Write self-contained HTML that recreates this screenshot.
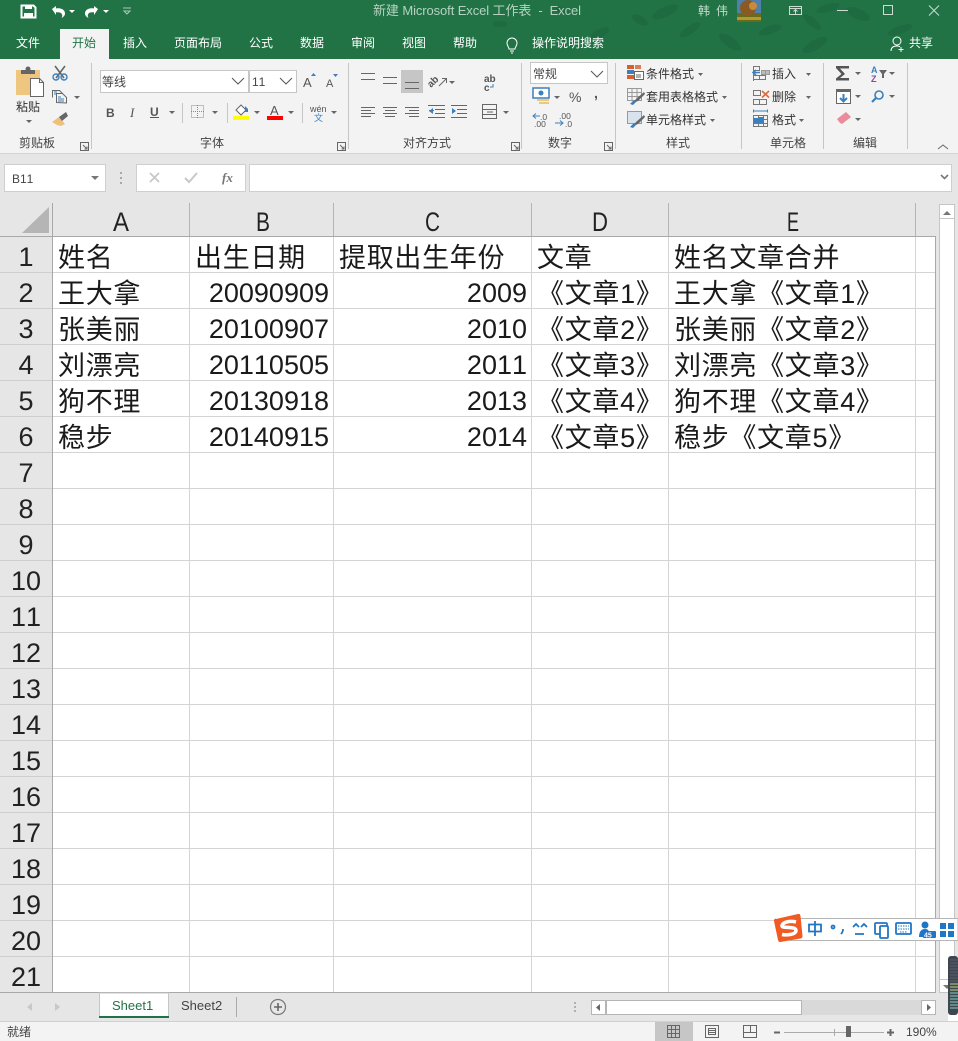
<!DOCTYPE html>
<html lang="zh"><head><meta charset="utf-8"><title>Excel</title>
<style>
html,body{margin:0;padding:0;width:958px;height:1041px;overflow:hidden;background:#fff}
svg{display:block}
text{font-family:"Liberation Sans","Noto Sans CJK SC",sans-serif;font-kerning:none}
.t{font-size:12px;fill:#fff}
.c{font-size:27px;letter-spacing:.7px;fill:#1a1a1a;transform:translateY(1px)}
.n{font-size:27px;fill:#1a1a1a;text-anchor:end}
.h{font-size:27px;fill:#222;text-anchor:middle}
.l{font-size:27px;fill:#222}
.sf{font-family:"Liberation Serif",serif}
.ln{stroke:#d4d4d4;stroke-width:1;fill:none}
.ic{stroke:#666;stroke-width:1;fill:none}
.ar{fill:#666}
</style></head><body>
<svg width="958" height="1041" viewBox="0 0 958 1041" xmlns="http://www.w3.org/2000/svg">
<!-- Title & tab background -->
<rect width="958" height="59" fill="#217346"/>
<g fill="#1e6a41">
<ellipse cx="665" cy="12" rx="14" ry="5" transform="rotate(-25 665 12)"/><ellipse cx="640" cy="20" rx="9" ry="4" transform="rotate(30 640 20)"/><ellipse cx="690" cy="30" rx="12" ry="4" transform="rotate(-35 690 30)"/><ellipse cx="730" cy="42" rx="13" ry="5" transform="rotate(35 730 42)"/><ellipse cx="770" cy="30" rx="12" ry="4" transform="rotate(-20 770 30)"/><ellipse cx="812" cy="22" rx="11" ry="4" transform="rotate(40 812 22)"/><ellipse cx="815" cy="45" rx="14" ry="5" transform="rotate(-30 815 45)"/><ellipse cx="858" cy="14" rx="13" ry="5" transform="rotate(25 858 14)"/><ellipse cx="828" cy="8" rx="12" ry="4" transform="rotate(-15 828 8)"/><ellipse cx="900" cy="30" rx="13" ry="4" transform="rotate(-20 900 30)"/><ellipse cx="560" cy="10" rx="7" ry="3" transform="rotate(25 560 10)"/><ellipse cx="600" cy="33" rx="10" ry="4" transform="rotate(-25 600 33)"/><ellipse cx="500" cy="24" rx="7" ry="3"/>
</g>
<!-- QAT -->
<path d="M21.500 5.500h12l2 2v10h-14z" fill="none" stroke="#fff" stroke-width="2"/><rect x="25" y="5" width="7" height="4" fill="#fff"/><rect x="24" y="13" width="9" height="5" fill="#fff"/>
<path d="M52 9l4-3v2.500c6-1 9 2 9 5 0 2-1.500 3.500-3.500 4.500 1-1.500 1-3 0-4.500-1-1.200-3-1.500-5.500-1.200V15z" fill="#fff"/><path d="M69 10h6l-3 3z" fill="#fff"/>
<path d="M98 9l-4-3v2.500c-6-1-9 2-9 5 0 2 1.500 3.500 3.500 4.500-1-1.500-1-3 0-4.500 1-1.200 3-1.500 5.500-1.200V15z" fill="#fff"/><path d="M103 10h6l-3 3z" fill="#fff"/>
<path d="M123 8h8M124 11h6l-3 3z" stroke="#a9c9b6" fill="none"/>
<text x="373" y="15" font-size="13" fill="#b6d2c1" textLength="208" lengthAdjust="spacing" style="white-space:pre">新建 Microsoft Excel 工作表  -  Excel</text>
<text x="698" y="15" font-size="12" fill="#c3dacb" textLength="30">韩 伟</text>
<!-- Avatar -->
<rect x="737" y="0" width="24" height="22" fill="#4f7fae"/><rect x="737" y="13" width="24" height="9" fill="#6a6a1c"/><circle cx="748" cy="8" r="8" fill="#8a5a25"/><circle cx="753" cy="6" r="4" fill="#c98a3a"/><rect x="737" y="17" width="24" height="3" fill="#b09a2a"/>
<!-- window controls -->
<rect x="789.500" y="6.500" width="12" height="8" fill="none" stroke="#c9ddd0"/><path d="M790 8.500h12M795.500 14v-4M793.500 11.500l2-2 2 2" stroke="#c9ddd0" fill="none"/>
<path d="M837 10.500h11" stroke="#c9ddd0"/><rect x="883.500" y="5.500" width="9" height="9" fill="none" stroke="#c9ddd0"/>
<path d="M929 5.500l10 10M939 5.500l-10 10" stroke="#c9ddd0"/>
<!-- Tabs -->
<rect x="60" y="29" width="49" height="30" fill="#f3f3f3"/>
<text x="16" y="47" class="t">文件</text><text x="123" y="47" class="t">插入</text><text x="174" y="47" class="t">页面布局</text><text x="249" y="47" class="t">公式</text><text x="300" y="47" class="t">数据</text><text x="351" y="47" class="t">审阅</text><text x="402" y="47" class="t">视图</text><text x="453" y="47" class="t">帮助</text><text x="532" y="47" class="t">操作说明搜索</text><text x="909" y="47" class="t">共享</text>
<text x="72" y="47" font-size="12" fill="#217346">开始</text>
<path d="M509 49c0-2-2-3-2-6a5 5 0 0 1 10 0c0 3-2 4-2 6zM510 51h4M511 53h2" fill="none" stroke="#fff"/>
<circle cx="897" cy="41" r="4" fill="none" stroke="#fff"/><path d="M891 51c0-4 3-5 6-5 1 0 2 .3 3 .7M901 47v5M898.500 49.500h5" fill="none" stroke="#fff"/>
<!-- Ribbon -->
<rect y="59" width="958" height="94" fill="#f3f3f3"/>
<rect y="153" width="958" height="1" fill="#d5d5d5"/>
<rect y="154" width="958" height="49" fill="#e6e6e6"/>
<g stroke="#c6c6c6"><path d="M91.500 63v86M348.500 63v86M521.500 63v86M615.500 63v86M741.500 63v86M823.500 63v86M907.500 63v86"/></g>
<!-- Clipboard -->
<path d="M16 70h24v25H16z" fill="#efc67f"/><rect x="21" y="70" width="14" height="4" fill="#666"/><circle cx="28" cy="69" r="2.500" fill="#666"/>
<path d="M30.500 78.500h9l4 4v14h-13z" fill="#fff" stroke="#666"/><path d="M39.500 78.500v4h4" fill="none" stroke="#666"/>
<text x="16" y="111" font-size="12" fill="#333">粘贴</text><path class="ar" d="M26 120h6l-3 3z"/>
<path d="M55 66l9 12M65 66l-9 12" stroke="#666" stroke-width="1.600" fill="none"/><circle cx="56" cy="77" r="3" fill="none" stroke="#3b7fbd" stroke-width="1.400"/><circle cx="64" cy="77" r="3" fill="none" stroke="#3b7fbd" stroke-width="1.400"/>
<path class="ic" d="M52.500 97.500v-7h7l3 3M56.500 102.500v-9h6l4 4v5.500z" fill="#fff"/><path d="M58 97h3M58 99h6M58 101h6M54 92h3M54 94h2" stroke="#3b7fbd" stroke-width="1"/><path class="ar" d="M74 96h6l-3 3z"/>
<path d="M52 122l7-5 6 7-4 2-4-1z" fill="#eec07c"/><path d="M59 117l3 4 6-5-2-4z" fill="#666"/>
<text x="19" y="147" font-size="12" fill="#444">剪贴板</text>
<path class="ic" d="M80.500 142.500h8v8h-8zM83 145l4 4M87 146.500v2.500h-2.500" stroke="#777"/>
<!-- Font -->
<rect x="100.500" y="70.500" width="148" height="22" fill="#fff" stroke="#c6c6c6"/><rect x="249.500" y="70.500" width="47" height="22" fill="#fff" stroke="#c6c6c6"/>
<text x="102" y="86" font-size="12" fill="#444">等线</text><text x="252" y="86" font-size="12" fill="#444">11</text>
<path d="M232 78l6 6 6-6M280 78l6 6 6-6" fill="none" stroke="#555"/>
<text x="303" y="87" font-size="13" fill="#555">A</text><path d="M311 76h5l-2.500-3z" fill="#3b7fbd"/>
<text x="326" y="87" font-size="11" fill="#555">A</text><path d="M333 74h5l-2.500 3z" fill="#3b7fbd"/>
<text x="106" y="117" font-size="12" font-weight="bold" fill="#555">B</text><text x="130" y="117" font-size="13" font-style="italic" fill="#555" class="sf" style="font-family:'Liberation Serif',serif">I</text><text x="150" y="116" font-size="12" font-weight="bold" fill="#555">U</text><rect x="150" y="117" width="9" height="1" fill="#555"/>
<path class="ar" d="M169 111h6l-3 3z"/><path d="M182.500 103v20M227.500 103v20M302.500 103v20" stroke="#c6c6c6"/>
<rect x="191.500" y="105.500" width="12" height="12" fill="none" stroke="#888" stroke-dasharray="1 1"/><path d="M197.500 105v13M191 111.500h13" stroke="#888" stroke-dasharray="1 1"/>
<path class="ar" d="M212 111h6l-3 3z"/>
<path d="M236 110l5-5 5 5-5 5z" fill="#fff" stroke="#666"/><path d="M245 106l3 3v3h-3z" fill="#3b7fbd"/><rect x="233" y="116" width="16" height="4" fill="#ff0"/><path class="ar" d="M254 111h6l-3 3z"/>
<text x="270" y="115" font-size="13" fill="#555">A</text><rect x="267" y="116" width="16" height="4" fill="#f00"/><path class="ar" d="M288 111h6l-3 3z"/>
<text x="310" y="112" font-size="9" fill="#555">wén</text><text x="314" y="121" font-size="9" fill="#3b7fbd">文</text><path class="ar" d="M331 111h6l-3 3z"/>
<text x="200" y="147" font-size="12" fill="#444">字体</text>
<path class="ic" d="M337.500 142.500h8v8h-8zM340 145l4 4M344 146.500v2.500h-2.500" stroke="#777"/>
<!-- Alignment -->
<rect x="401" y="70" width="22" height="23" fill="#c6c6c6"/>
<g stroke="#666"><path d="M361 73.500h14M361 79.500h14M383 77.500h14M383 83.500h14M405 82.500h14M405 88.500h14"/>
<path d="M361 107.500h14M361 110.500h10M361 113.500h14M361 116.500h10M383 107.500h14M385 110.500h10M383 113.500h14M385 116.500h10M405 107.500h14M409 110.500h10M405 113.500h14M409 116.500h10"/>
<path d="M435 109.500h10M435 113.500h10M428 117.500h17M428 105.500h17"/><path d="M457 109.500h10M457 113.500h10M451 117.500h16M451 105.500h16"/></g>
<path d="M429 111l4-3v6z" fill="#3b7fbd"/><path d="M429 110.500h5" stroke="#3b7fbd"/><path d="M456 111l-4-3v6z" fill="#3b7fbd"/>
<text x="431" y="88" font-size="10" fill="#555" font-weight="bold" transform="rotate(-45 431 88)">ab</text><path d="M439 86l7-7M442 78.500h4.500V83" fill="none" stroke="#666"/><path class="ar" d="M449 81h6l-3 3z"/>
<text x="403" y="147" font-size="12" fill="#444">对齐方式</text>
<text x="484" y="82" font-size="10" fill="#555" font-weight="bold">ab</text><text x="484" y="91" font-size="10" fill="#555" font-weight="bold">c</text><path d="M493 84v3h-3" stroke="#3b7fbd" fill="none"/>
<rect x="482.500" y="104.500" width="14" height="14" fill="none" stroke="#666"/><path d="M483 109.500h14M483 114.500h14M487 112h6" stroke="#666"/><path class="ar" d="M503 111h6l-3 3z"/>
<path class="ic" d="M511.500 142.500h8v8h-8zM514 145l4 4M518 146.500v2.500h-2.500" stroke="#777"/>
<!-- Number -->
<rect x="530.500" y="62.500" width="77" height="21" fill="#fff" stroke="#c6c6c6"/><text x="533" y="78" font-size="12" fill="#444">常规</text><path d="M591 71l6 6 6-6" fill="none" stroke="#555"/>
<rect x="533" y="88" width="16" height="10" fill="#fff" stroke="#3b7fbd" stroke-width="1.500"/><circle cx="541" cy="93" r="2.500" fill="#3b7fbd"/><rect x="537" y="99" width="12" height="2" fill="#efc67f"/><rect x="539" y="102" width="10" height="2" fill="#efc67f"/><path class="ar" d="M554 96h6l-3 3z"/>
<text x="569" y="102" font-size="14" fill="#555">%</text><text x="594" y="98" font-size="14" fill="#555" font-weight="bold">,</text>
<text x="540" y="120" font-size="8.500" fill="#555">.0</text><text x="534" y="127" font-size="8.500" fill="#555">.00</text><path d="M533 116h7M536 113.500l-3 2.500 3 2.500" stroke="#3b7fbd" fill="none"/>
<text x="559" y="119" font-size="8.500" fill="#555">.00</text><text x="565" y="127" font-size="8.500" fill="#555">.0</text><path d="M555 123h8M560 120.500l3 2.500-3 2.500" stroke="#3b7fbd" fill="none"/>
<text x="548" y="147" font-size="12" fill="#444">数字</text>
<path class="ic" d="M604.500 142.500h8v8h-8zM607 145l4 4M611 146.500v2.500h-2.500" stroke="#777"/>
<!-- Styles -->
<rect x="627" y="65" width="7" height="4" fill="#d9602c"/><rect x="635" y="65" width="6" height="4" fill="#d9602c" opacity=".8"/><rect x="627" y="70" width="7" height="4" fill="#3b7fbd"/><rect x="627" y="75" width="7" height="4" fill="#d9602c"/><rect x="634.500" y="71.500" width="9" height="8" fill="#fff" stroke="#666"/><path d="M636 75h5M636 77h5" stroke="#666"/>
<text x="646" y="78" font-size="12" fill="#333">条件格式</text><path class="ar" d="M698 73h5l-2.500 3z"/>
<g fill="none" stroke="#999"><rect x="627.500" y="88.500" width="14" height="12"/><path d="M627 92.500h15M627 96.500h15M632 88v13M637 88v13"/></g><path d="M633 103l3-4 8-7 1 2-7 7z" fill="#666"/><path d="M630 104l4-4 2 2-3 3z" fill="#3b7fbd"/>
<text x="646" y="101" font-size="12" fill="#333">套用表格格式</text><path class="ar" d="M722 96h5l-2.500 3z"/>
<rect x="627.500" y="111.500" width="14" height="12" fill="#d8e3ee" stroke="#999"/><path d="M633 126l3-4 8-7 1 2-7 7z" fill="#666"/><path d="M630 127l4-4 2 2-3 3z" fill="#3b7fbd"/>
<text x="646" y="124" font-size="12" fill="#333">单元格样式</text><path class="ar" d="M710 119h5l-2.500 3z"/>
<text x="666" y="147" font-size="12" fill="#444">样式</text>
<!-- Cells -->
<g fill="none" stroke="#777"><path d="M753.500 66.500h6v4h-6zM753.500 75.500h12v4h-12zM759.500 75.500v4M753.500 66v15"/><rect x="761.500" y="70.500" width="4" height="4" fill="#bbb" stroke="#999"/><rect x="765.500" y="70.500" width="4" height="4" fill="#bbb" stroke="#999"/>
<path d="M753.500 90.500h7v5h-7zM753.500 99.500h13v5h-13zM759.500 99.500v5"/></g>
<path d="M753 72.500h7M756 70l-3 2.500 3 2.500" stroke="#3b7fbd" stroke-width="1.500" fill="none"/>
<path d="M762 91l7 6.500M769 91l-7 6.500" stroke="#e0673a" stroke-width="1.600"/>
<text x="772" y="78" font-size="12" fill="#333">插入</text><path class="ar" d="M806 73h5l-2.500 3z"/>
<text x="772" y="101" font-size="12" fill="#333">删除</text><path class="ar" d="M806 96h5l-2.500 3z"/>
<text x="772" y="124" font-size="12" fill="#333">格式</text><path class="ar" d="M799 119h5l-2.500 3z"/>
<g fill="none" stroke="#777"><rect x="753.500" y="115.500" width="14" height="11"/><path d="M753 119.500h15M753 123.500h15M758.500 115v12M763.500 115v12"/></g><rect x="759" y="117" width="5" height="6" fill="#3b7fbd"/><rect x="754" y="118" width="5" height="5" fill="#3b7fbd"/><path d="M753.500 111h14M753.500 109.500v3M767.500 109.500v3" stroke="#3b7fbd"/>
<text x="770" y="147" font-size="12" fill="#444">单元格</text>
<!-- Editing -->
<path d="M836 66h13v2.500h-9l5 5.500-5 4h9v2.500h-13v-2l5.500-4.500-5.500-6z" fill="#555"/><path class="ar" d="M855 72h6l-3 3z"/>
<text x="871" y="73" font-size="9" font-weight="bold" fill="#3b7fbd">A</text><text x="871" y="82" font-size="9" font-weight="bold" fill="#8a4a9c">Z</text><path d="M879 70h8l-3 4v4h-2v-4z" fill="#666"/><path class="ar" d="M889 72h6l-3 3z"/>
<rect x="836.500" y="89.500" width="14" height="14" fill="#fff" stroke="#666"/><rect x="836" y="89" width="15" height="3" fill="#666"/><path d="M843.500 94v7M840 98l3.500 3.500L847 98" stroke="#3b7fbd" stroke-width="2" fill="none"/><path class="ar" d="M855 95h6l-3 3z"/>
<circle cx="879" cy="95" r="4" fill="none" stroke="#3b7fbd" stroke-width="1.600"/><path d="M876 98l-4 4" stroke="#3b7fbd" stroke-width="2.200"/><path class="ar" d="M889 95h6l-3 3z"/>
<path d="M837 119l9-7 5 5-9 7-2-1z" fill="#ea8b9a"/><path class="ar" d="M855 118h6l-3 3z"/>
<text x="853" y="147" font-size="12" fill="#444">编辑</text>
<path d="M938 149l5-4 5 4" fill="none" stroke="#666"/>
<!-- Formula bar -->
<rect x="4.500" y="164.500" width="101" height="27" fill="#fff" stroke="#cfcfcf"/><text x="12" y="183" font-size="12" fill="#444">B11</text><path d="M91 176h8l-4 4z" fill="#777"/>
<g fill="#a8a8a8"><rect x="120" y="172" width="2" height="2"/><rect x="120" y="177" width="2" height="2"/><rect x="120" y="182" width="2" height="2"/></g>
<rect x="136.500" y="164.500" width="109" height="27" fill="#fff" stroke="#cfcfcf"/>
<path d="M150 173l9 9M159 173l-9 9" stroke="#c8c8c8" stroke-width="1.800"/><path d="M185 178l4 4 8-9" stroke="#c8c8c8" stroke-width="2" fill="none"/>
<text x="222" y="182" font-size="13" font-style="italic" font-weight="bold" fill="#777" style="font-family:'Liberation Serif',serif">fx</text>
<rect x="249.500" y="164.500" width="702" height="27" fill="#fff" stroke="#cfcfcf"/><path d="M941 175l3.500 3.500 3.500-3.500" fill="none" stroke="#777" stroke-width="1.600"/>
<!-- Sheet -->
<rect y="203" width="958" height="790" fill="#e6e6e6"/>
<rect x="53" y="237" width="883" height="756" fill="#fff"/>
<path d="M22 233l27-26v26z" fill="#b5b5b5"/>
<g class="ln">
<path d="M53 272.500h883M53 308.500h883M53 344.500h883M53 380.500h883M53 416.500h883M53 452.500h883M53 488.500h883M53 524.500h883M53 560.500h883M53 596.500h883M53 632.500h883M53 668.500h883M53 704.500h883M53 740.500h883M53 776.500h883M53 812.500h883M53 848.500h883M53 884.500h883M53 920.500h883M53 956.500h883"/>
<path d="M189.500 237v756M333.500 237v756M531.500 237v756M668.500 237v756M915.500 237v756"/>
<path d="M0 272.500h52M0 308.500h52M0 344.500h52M0 380.500h52M0 416.500h52M0 452.500h52M0 488.500h52M0 524.500h52M0 560.500h52M0 596.500h52M0 632.500h52M0 668.500h52M0 704.500h52M0 740.500h52M0 776.500h52M0 812.500h52M0 848.500h52M0 884.500h52M0 920.500h52M0 956.500h52" stroke="#cfcfcf"/>
</g>
<g stroke="#b5b5b5"><path d="M189.500 203v33M333.500 203v33M531.500 203v33M668.500 203v33M915.500 203v33"/></g>
<path d="M0 236.500h936M52.500 203v790M0 992.500h936M935.500 236v757" stroke="#a8a8a8" fill="none"/>
<!-- Headers -->
<text class="l" x="113" y="231" textLength="16" lengthAdjust="spacingAndGlyphs">A</text><text class="l" x="256" y="231" textLength="14" lengthAdjust="spacingAndGlyphs">B</text><text class="l" x="425" y="231" textLength="15" lengthAdjust="spacingAndGlyphs">C</text><text class="l" x="592" y="231" textLength="16" lengthAdjust="spacingAndGlyphs">D</text><text class="l" x="787" y="231" textLength="12" lengthAdjust="spacingAndGlyphs">E</text>
<text class="h" x="26" y="266">1</text><text class="h" x="26" y="302">2</text><text class="h" x="26" y="338">3</text><text class="h" x="26" y="374">4</text><text class="h" x="26" y="410">5</text><text class="h" x="26" y="446">6</text><text class="h" x="26" y="482">7</text><text class="h" x="26" y="518">8</text><text class="h" x="26" y="554">9</text><text class="h" x="26" y="590">10</text><text class="h" x="26" y="626">11</text><text class="h" x="26" y="662">12</text><text class="h" x="26" y="698">13</text><text class="h" x="26" y="734">14</text><text class="h" x="26" y="770">15</text><text class="h" x="26" y="806">16</text><text class="h" x="26" y="842">17</text><text class="h" x="26" y="878">18</text><text class="h" x="26" y="914">19</text><text class="h" x="26" y="950">20</text><text class="h" x="26" y="986">21</text>
<!-- Cells -->
<text class="c" x="58" y="266">姓名</text><text class="c" x="195" y="266">出生日期</text><text class="c" x="339" y="266">提取出生年份</text><text class="c" x="537" y="266">文章</text><text class="c" x="674" y="266">姓名文章合并</text>
<text class="c" x="58" y="302">王大拿</text><text class="n" x="329" y="302">20090909</text><text class="n" x="527" y="302">2009</text><text class="c" x="537" y="302">《文章1》</text><text class="c" x="674" y="302">王大拿《文章1》</text>
<text class="c" x="58" y="338">张美丽</text><text class="n" x="329" y="338">20100907</text><text class="n" x="527" y="338">2010</text><text class="c" x="537" y="338">《文章2》</text><text class="c" x="674" y="338">张美丽《文章2》</text>
<text class="c" x="58" y="374">刘漂亮</text><text class="n" x="329" y="374">20110505</text><text class="n" x="527" y="374">2011</text><text class="c" x="537" y="374">《文章3》</text><text class="c" x="674" y="374">刘漂亮《文章3》</text>
<text class="c" x="58" y="410">狗不理</text><text class="n" x="329" y="410">20130918</text><text class="n" x="527" y="410">2013</text><text class="c" x="537" y="410">《文章4》</text><text class="c" x="674" y="410">狗不理《文章4》</text>
<text class="c" x="58" y="446">稳步</text><text class="n" x="329" y="446">20140915</text><text class="n" x="527" y="446">2014</text><text class="c" x="537" y="446">《文章5》</text><text class="c" x="674" y="446">稳步《文章5》</text>
<!-- V scrollbar -->
<rect x="939.500" y="204.500" width="15" height="788" fill="#fff" stroke="#c6c6c6"/>
<path d="M939 218.500h16M939 979.500h16" stroke="#c6c6c6"/>
<path d="M943 215l4-4 4 4z" fill="#777"/><path d="M943 985l4 4 4-4z" fill="#777"/>
<rect x="948" y="956" width="10" height="59" rx="3" fill="#3f4650"/>
<g stroke="#56606a"><path d="M950 960h8M950 963h8M950 966h8M950 969h8M950 972h8M950 975h8M950 978h8M950 981h8"/></g>
<g stroke="#b9d487"><path d="M950 984h8M950 987h8M950 990h8"/></g><g stroke="#7fd1bc"><path d="M950 993h8M950 996h8M950 999h8M950 1002h8M950 1005h8M950 1008h8"/></g>
<!-- Sheet tabs -->
<rect y="993" width="948" height="28" fill="#e6e6e6"/>
<rect y="1021" width="958" height="1" fill="#d0d0d0"/>
<rect y="1022" width="958" height="19" fill="#f3f3f3"/>
<path d="M32 1003v8l-5-4zM55 1003v8l5-4z" fill="#c8c8c8"/>
<rect x="99.500" y="993" width="69" height="24" fill="#fff" stroke="#c6c6c6"/><rect x="99" y="1016" width="70" height="2" fill="#217346"/>
<text x="112" y="1010" font-size="13" fill="#217346">Sheet1</text><text x="181" y="1010" font-size="13" fill="#444">Sheet2</text>
<path d="M236.500 997v20" stroke="#aaa"/>
<circle cx="278" cy="1007" r="7.500" fill="none" stroke="#777" stroke-width="1.200"/><path d="M274 1007h8M278 1003v8" stroke="#666" stroke-width="1.600"/>
<g fill="#b0b0b0"><rect x="574" y="1002" width="2" height="2"/><rect x="574" y="1006" width="2" height="2"/><rect x="574" y="1010" width="2" height="2"/></g>
<rect x="591" y="1000" width="345" height="15" fill="#d9d9d9"/>
<rect x="591.500" y="1000.500" width="14" height="14" fill="#fff" stroke="#b5b5b5"/><rect x="606.500" y="1000.500" width="195" height="14" fill="#fff" stroke="#b5b5b5"/><rect x="921.500" y="1000.500" width="14" height="14" fill="#fff" stroke="#b5b5b5"/>
<path d="M600 1004v7l-4-3.500zM927 1004v7l4-3.500z" fill="#666"/>
<!-- Status bar -->
<text x="7" y="1036" font-size="12" fill="#444">就绪</text>
<rect x="655" y="1022" width="38" height="19" fill="#c6c6c6"/>
<g fill="none" stroke="#666"><rect x="667.500" y="1025.500" width="12" height="12"/><path d="M671.500 1025v13M675.500 1025v13M667 1029.500h13M667 1033.500h13"/>
<rect x="705.500" y="1025.500" width="13" height="12"/><rect x="708.500" y="1028.500" width="7" height="6"/><path d="M709 1030.500h6M709 1032.500h6"/>
<rect x="743.500" y="1025.500" width="13" height="12"/><path d="M743 1032.500h14M750.500 1025v7"/></g>
<path d="M774 1032.500h6" stroke="#666" stroke-width="2"/><path d="M784 1032.500h100M834.500 1029v7" stroke="#aaa"/><rect x="846" y="1026" width="5" height="11" fill="#666"/>
<path d="M887 1032.500h7M890.500 1029v7" stroke="#666" stroke-width="2"/>
<text x="906" y="1036" font-size="12" fill="#444">190%</text>
<!-- IME -->
<rect x="790" y="918.500" width="168" height="22" fill="#fff" stroke="#b5b5b5"/>
<path d="M776 919l22-5q2-.5 2.500 2l2 20q.2 2-2 2.500l-20 3.500q-2 .3-2.500-2l-4-19q-.4-2 2-2.500z" fill="#f15a22"/>
<path d="M796 922c-6-1.500-13 0-14 3.500-1 3.500 14 0 14 5 0 4-9 5-14 4" fill="none" stroke="#fff" stroke-width="3.500"/>
<g fill="none" stroke="#2076c6" stroke-width="1.800">
<path d="M809 924.500h12v7h-12zM815 921v15"/>
<circle cx="833" cy="927" r="1.500"/><path d="M843 929c0 3-1 4-2 5"/>
<path d="M853 927l3-3 3 3M861 927l3-3 3 3M855 934h9"/>
<rect x="875" y="923" width="12" height="11" rx="1"/><rect x="880" y="926" width="8" height="12" rx="1" fill="#fff"/>
<rect x="896" y="923" width="15" height="11" rx="1"/></g>
<path d="M898 926h11M898 929h11M900 932h7" stroke="#2076c6" stroke-dasharray="1.500 1"/>
<circle cx="925" cy="925" r="3.500" fill="#2076c6"/><path d="M919 937c0-5 2-8 6-8s4 2 4 8z" fill="#2076c6"/><rect x="923" y="931" width="13" height="7" rx="1" fill="#2076c6"/><text x="924" y="937.500" font-size="7" font-weight="bold" fill="#fff">45</text>
<g fill="#2076c6"><rect x="940" y="923" width="6" height="6"/><rect x="948" y="923" width="6" height="6"/><rect x="940" y="931" width="6" height="6"/><rect x="948" y="931" width="6" height="6"/></g>
</svg>
</body></html>
